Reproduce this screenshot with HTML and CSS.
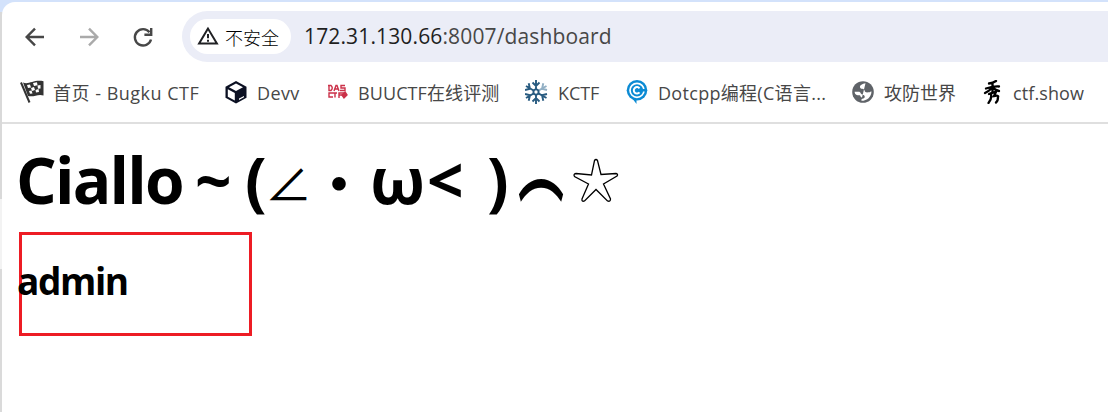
FILE: index.html
```
<!DOCTYPE html>
<html lang="zh-CN">
<head>
<meta charset="utf-8">
<title>dashboard</title>
<link rel="stylesheet" href="styles.css">
</head>
<body>
<div class="desktop">
<div class="window">
  <header class="toolbar">
    <svg class="nav back" viewBox="0 0 24 24"><path d="M21 12H4M12 3.700 3.700 12l8.300 8.300"/></svg>
    <svg class="nav forward" viewBox="0 0 24 24"><path d="M3 12h17M12 3.700l8.300 8.300-8.300 8.300"/></svg>
    <svg class="nav reload" viewBox="0 0 24 24"><path d="M20 14.500A8.200 8.200 0 1 1 18.500 7.200"/><path d="M20.200 3v6.700h-6.800"/></svg>
    <div class="address">
      <div class="security">
        <svg class="warning" viewBox="0 0 22 20"><path d="M11 2.600 2.100 17.500h17.800Z"/><path d="M11 8v4.200M11 13.800v2"/></svg>
        <span class="security-text">不安全</span>
      </div>
      <div class="url"><span class="host">172.31.130.66</span>:8007/dashboard</div>
    </div>
  </header>
  <nav class="bookmarks">
    <a class="bookmark"><svg class="icon" viewBox="0 0 24 24"><path d="M1 2.500 9.500 22.500" stroke="#333" stroke-width="2"/><path d="M3 2.500C9 5 13-.5 23.500 1.200V15.500C18 13.500 14 17.500 8 16Z" fill="#333"/><path d="M7 5l3-.5 1 3-3 .5ZM13 3l4-.8.5 3-3.500.7ZM11 8l3-1 1 3-3 1ZM17.500 5.500l3-.5v3.500l-2.500.2ZM9 11l2.500-.5 1 3-2.500.3ZM15.500 10l3-1 .5 3-3 .5Z" fill="#fff"/></svg><span class="label l1">首页 - Bugku CTF</span></a>
    <a class="bookmark"><svg class="icon" viewBox="0 0 24 24"><path d="M11 1 21.500 6.700v11L11 23.500.5 17.700v-11Z" fill="#0b1022"/><path d="M11 3.500 18 7.200l-7 3.700-7-3.700ZM2.800 9.200l7 3.700v7.600l-7-3.700ZM14 18.600l5-2.600v1.200l-5 2.700Z" fill="#fff"/></svg><span class="label l2">Devv</span></a>
    <a class="bookmark"><svg class="icon das" viewBox="0 0 24 24"><path d="M4 5v5.500h2q2.500-2.500 0-5H3M9 11l2-5.500h1L14 11M10 9h3M20 5.500h-4v2.500h4v2.500h-5M8 13H4v4h4M8 13h4M10 13v4.500M14 18v-5h5M14 15h4"/><path d="m20 12 2 3-3 3-2-3Z" fill="#cb3149"/></svg><span class="label l3">BUUCTF在线评测</span></a>
    <a class="bookmark"><svg class="icon flake" viewBox="0 0 24 24"><path d="M11 0v24M1 6 9 10.800M13 13.200l8.500 4.800M1 18 9 13.200M7.500 2.500 11 6l3.500-3.500M7.500 21.500 11 18l3.500 3.500M0 10l5-1.300L3.700 3.300M0 14l5 1.300-1.300 5.400M22 14l-5 1.300 1.300 5.400"/><path class="pale" d="m13 10.800 8.500-4.800M22 10l-5-1.300 1.300-5.400"/><circle cx="11" cy="12" r="2.600" fill="#fff"/></svg><span class="label l4">KCTF</span></a>
    <a class="bookmark"><svg class="icon" viewBox="0 0 24 24"><circle cx="12" cy="10.300" r="10.300" fill="#0c8bd4"/><path d="m7 18 4.500 6v-5Z" fill="#0c8bd4"/><circle cx="12" cy="10.300" r="7" fill="none" stroke="#fff" stroke-width="1.700"/><path d="M14.500 8.300a3.200 3.200 0 1 0 0 4" fill="none" stroke="#fff" stroke-width="2"/><path d="M17 9h4v2.500h-4Z" fill="#0c8bd4"/></svg><span class="label l5">Dotcpp编程(C语言...</span></a>
    <a class="bookmark"><svg class="icon" viewBox="0 0 24 24"><circle cx="11" cy="12" r="10.800" fill="#5f6368"/><path d="M13.500 3.200C10.500 3.500 7.600 5.200 8 7.300c.5 2.200 4.200 1.200 4.500 3 .3 2.300 2.200 2.300 4.300 2 1.500-.2 1.500-1 2.700-.9-.3 5.500-4.200 9.300-10 9.300-.5-1.300.4-1.800 1.700-2.100 2.300-.6 2-3.700-.6-3.900-2-.2-1.700-2.900-4-2.900l-4-.1c.2 3.200 2.600 3.600 4.600 3.600 1.800 0 .6 1.900 2.800 2.100" fill="#fff"/></svg><span class="label l6">攻防世界</span></a>
    <a class="bookmark"><svg class="icon ink" viewBox="0 0 24 24"><path d="M8 3.500Q12 3 15 1M5 8.500Q13 6 18 6.500M11.500 3v9M11 8Q8 11 4 13M12 8q3 2.500 6 3"/><path d="M8 14q5-2 7-2l-2 4q5-1 4 1 0 4-2 5.500M10 14q1 5-2.500 9"/></svg><span class="label l7">ctf.show</span></a>
  </nav>
  <main class="page">
    <h1 class="greeting"><span class="g word">Ciallo</span><span class="g tilde">~</span><span class="g open">(</span><span class="g angle">∠</span><span class="g dot">・</span><span class="g omega">ω</span><span class="g less">&lt;</span><span class="g close">)</span><span class="g arc">⌒</span><svg class="star" viewBox="0 0 48 48"><path d="M22.500 3.500Q24 1.500 25.500 3.500L29 17.500 44 16.500Q46.500 17 45 19L31.500 27 38.500 42Q38.500 45 35.500 44L24 32.500 12.500 44Q9.500 45 10 42L16.500 27 2.500 19.500Q1 17 4 16.500L19.500 18Z"/></svg></h1>
    <div class="result"><h2 class="user">admin</h2></div>
  </main>
</div>
</div>
</body>
</html>
```
FILE: styles.css
```
* { box-sizing: border-box; }
body { margin: 0; background: #fff; font-family: "Open Sans", "Noto Sans CJK SC", sans-serif; }
.desktop { height: 412px; padding: 2px 0 0 2px; overflow: hidden; background: linear-gradient(to bottom, #d3e2fb 0 12px, #d9d9d9 12px 199px, #f3f3f3 199px 269px, #dadada 269px); }
.window { height: 410px; background: #fff; border-top-left-radius: 13px; }
.toolbar { display: flex; align-items: center; height: 69px; padding-left: 21px; }
.nav { width: 24px; height: 24px; flex: none; fill: none; stroke: #474747; stroke-width: 2.400; }
.forward { margin-left: 30px; stroke: #aaa; }
.reload { margin-left: 30px; }
.address { display: flex; align-items: center; flex: 1; height: 51px; margin-left: 27px; padding-left: 8px; background: #ebedf7; border-radius: 26px 0 0 26px; }
.security { display: flex; align-items: center; width: 101px; height: 35px; padding-left: 7px; background: #fff; border-radius: 18px; }
.warning { width: 22px; height: 20px; margin-bottom: 1px; fill: none; stroke: #202124; stroke-width: 2; }
.security-text { margin-left: 6px; font: 18px/24px "Noto Sans CJK SC", sans-serif; font-weight: 300; color: #000; }
.url { margin-left: 13px; padding-bottom: 2px; font-size: 21px; line-height: 30px; letter-spacing: .14px; color: #474747; white-space: nowrap; }
.host { color: #1f1f1f; }
.bookmarks { display: grid; grid-template-columns: 205px 100px 200px 100px 227px 129px 127px; height: 53px; padding: 0 0 10px 18px; border-bottom: 2px solid #dfdfdf; }
.bookmark { display: flex; align-items: center; color: #474747; white-space: nowrap; }
.icon { width: 24px; height: 24px; margin-right: 9px; flex: none; fill: none; }
.label { padding-top: 2px; font-size: 18px; line-height: 26px; }
.l1 { letter-spacing: .5px; }
.l2 { letter-spacing: .4px; margin-left: -1px; }
.l3 { letter-spacing: .1px; }
.l4 { letter-spacing: -.1px; }
.l5 { letter-spacing: .3px; }
.l6 { margin-left: -1px; }
.l7 { letter-spacing: .1px; margin-left: -1px; }
.das { stroke: #cb3149; stroke-width: 1.400; }
.flake { stroke: #285b80; stroke-width: 1.900; }
.flake .pale { stroke: #91afc4; }
.ink { stroke: #000; stroke-width: 2.300; stroke-linecap: round; }
.page { padding: 16px 17px; }
.greeting { display: flex; height: 80px; margin: 0; font-size: 64px; line-height: 80px; font-weight: 700; color: #000; white-space: nowrap; }
.g { flex: none; }
.word { width: 178px; margin-left: -3px; letter-spacing: -1.800px; }
.tilde { width: 51px; padding-left: 1px; }
.open { width: 25px; }
.angle { width: 42px; margin-left: -5px; padding-top: 1px; font-family: "Noto Sans CJK SC", sans-serif; font-size: 47px; font-weight: 400; }
.dot { width: 63px; font-family: "Noto Sans CJK SC", sans-serif; font-weight: 400; }
.omega { width: 57px; }
.less { width: 60px; }
.close { width: 31px; }
.arc { width: 54px; font-family: "Noto Sans CJK SC", sans-serif; transform: translateY(23px) scale(.72, 1.2); transform-origin: 0 0; }
.star { width: 48px; height: 48px; margin-top: 17px; fill: none; stroke: #000; stroke-width: 1.300; }
.result { width: 233px; height: 104px; margin-top: 12px; border: 3px solid #ed1c24; }
.user { margin: 20px 0 0 -5px; font-size: 37px; line-height: 52px; letter-spacing: -1.400px; font-weight: 700; color: #000; }
```
